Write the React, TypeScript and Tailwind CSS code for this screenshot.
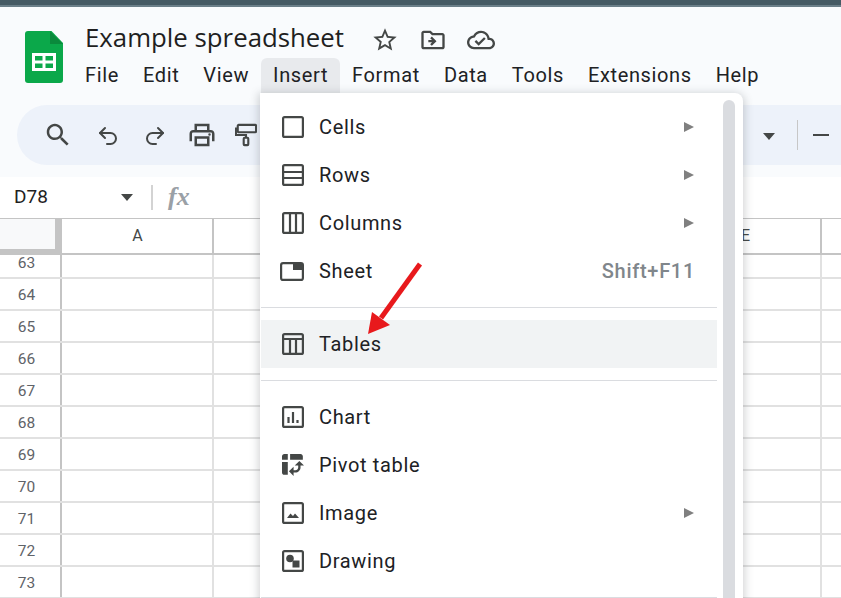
import { Redo2, Undo2 } from "lucide-react";
import type { ReactNode } from "react";

const menuBar = ["File", "Edit", "View", "Insert", "Format", "Data", "Tools", "Extensions", "Help"];
const rowNumbers = [64, 65, 66, 67, 68, 69, 70, 71, 72, 73];
const columns = ["A", "B", "C", "D", "E"];

function Mat({ d, className }: { d: string; className: string }) {
  return (
    <svg viewBox="0 0 24 24" className={className} fill="currentColor">
      <path d={d} />
    </svg>
  );
}

function SheetsLogo() {
  return (
    <svg viewBox="0 0 38 52" className="h-[52px] w-[38px] shrink-0">
      <path d="M3 0h23.500l11.500 12v37a3 3 0 0 1-3 3H3a3 3 0 0 1-3-3V3a3 3 0 0 1 3-3z" fill="#0ba84a" />
      <path d="M25 0l13 13H25z" fill="#0a8a3c" />
      <path d="M7 22h24v18H7z" fill="#fff" />
      <path d="M10 25h7.500v4.500H10zM20.500 25H28v4.500h-7.500zM10 32.500h7.500V37H10zM20.500 32.500H28V37h-7.500z" fill="#0ba84a" />
    </svg>
  );
}

function MenuIcon({ children }: { children: ReactNode }) {
  return (
    <svg viewBox="0 0 22 22" className="h-[22px] w-[22px] shrink-0" fill="none" stroke="#444746" strokeWidth="2.200">
      {children}
    </svg>
  );
}

const box = <rect x="1.100" y="1.100" width="19.800" height="19.800" rx="1.500" />;

function MenuRow({
  icon,
  label,
  arrow,
  shortcut,
  active,
}: {
  icon: ReactNode;
  label: string;
  arrow?: boolean;
  shortcut?: string;
  active?: boolean;
}) {
  return (
    <div className={`flex h-12 w-[456px] items-center pl-[21px] pr-[23px] ${active ? "bg-[#f1f3f4]" : ""}`}>
      <div className="flex w-[37px] shrink-0 items-center">{icon}</div>
      <span className="text-[20px] tracking-[0.65px] text-[#202124]">{label}</span>
      <div className="flex-1" />
      {shortcut && <span className="-mr-px text-[20px] font-medium tracking-[0.7px] text-[#80868b]">{shortcut}</span>}
      {arrow && <div className="h-0 w-0 border-y-[5.500px] border-l-[10px] border-y-transparent border-l-[#808080]" />}
    </div>
  );
}

function Separator() {
  return <div className="my-3 h-px w-[456px] bg-[#dadce0]" />;
}

function InsertMenu() {
  return (
    <div className="absolute left-[260px] top-[93px] flex h-[520px] w-[483px] rounded-tr-lg bg-white pl-px pt-[10px] shadow-[0_2px_8px_2px_rgba(60,64,67,0.22)]">
      <div className="w-[456px]">
        <MenuRow label="Cells" arrow icon={<MenuIcon>{box}</MenuIcon>} />
        <MenuRow
          label="Rows"
          arrow
          icon={
            <MenuIcon>
              {box}
              <path d="M1 8h20M1 14h20" />
            </MenuIcon>
          }
        />
        <MenuRow
          label="Columns"
          arrow
          icon={
            <MenuIcon>
              {box}
              <path d="M8 1v20M14 1v20" />
            </MenuIcon>
          }
        />
        <MenuRow
          label="Sheet"
          shortcut="Shift+F11"
          icon={
            <svg viewBox="0 0 24 19" className="-ml-[2px] h-[19px] w-[24px]" fill="none">
              <rect x="1.100" y="1.100" width="21.800" height="16.800" rx="2" stroke="#444746" strokeWidth="2.200" />
              <path d="M13 1h10v7H13z" fill="#444746" />
            </svg>
          }
        />
        <Separator />
        <MenuRow
          label="Tables"
          active
          icon={
            <MenuIcon>
              {box}
              <path d="M1 6h20M8 6v15M14 6v15" />
            </MenuIcon>
          }
        />
        <Separator />
        <MenuRow
          label="Chart"
          icon={
            <MenuIcon>
              {box}
              <path d="M6.500 11v6M11 6v11M15.500 14v3" />
            </MenuIcon>
          }
        />
        <MenuRow
          label="Pivot table"
          icon={
            <svg viewBox="3 3 19 19" className="h-[22px] w-[22px]" fill="#444746">
              <path d="M10 8h11V5c0-1.100-.9-2-2-2h-9v5zM3 8h5V3H5c-1.100 0-2 .9-2 2v3zm2 13h3V10H3v9c0 1.100.9 2 2 2zm8 1l-4-4 4-4zm1-9l4-4 4 4zm.580 6H13v-2h1.580c1.330 0 2.420-1.090 2.420-2.420V13h2v1.580c0 2.440-1.980 4.420-4.420 4.420z" />
            </svg>
          }
        />
        <MenuRow
          label="Image"
          arrow
          icon={
            <MenuIcon>
              {box}
              <path d="M5 16l3.500-4.500 2.500 2.500 2-2.500L17 16z" fill="#444746" stroke="none" />
            </MenuIcon>
          }
        />
        <MenuRow
          label="Drawing"
          icon={
            <MenuIcon>
              {box}
              <circle cx="8" cy="8.500" r="3.800" fill="#444746" stroke="none" />
              <path d="M10.500 10.500h7v7h-7z" fill="#444746" stroke="none" />
            </MenuIcon>
          }
        />
        <Separator />
      </div>
      <div className="-mt-[3px] ml-[6px] h-full w-3 rounded-t-md bg-[#dadce0]" />
    </div>
  );
}

function GridRow({ label, height, labelClass }: { label: number; height: string; labelClass: string }) {
  return (
    <div className={`flex shrink-0 border-b-2 border-[#e1e1e1] ${height}`}>
      <div
        className={`flex w-[62px] shrink-0 items-center justify-center border-r-2 border-[#c4c4c4] pr-[7px] text-[15.500px] leading-none text-[#5f6368] ${labelClass}`}
      >
        {label}
      </div>
      {columns.map((c) => (
        <div key={c} className="w-[152px] shrink-0 border-r-2 border-[#e1e1e1]" />
      ))}
    </div>
  );
}

export default function App() {
  return (
    <div className="relative h-[598px] w-[841px] overflow-hidden bg-white font-[Roboto,sans-serif]">
      <div className="h-[7px] border-b-2 border-[#6b7f89] bg-[#455a64]" />

      {/* Title + menus */}
      <div className="bg-[#f9fbfd]">
        <div className="flex h-[98px] items-start pl-[25px] pt-6">
          <SheetsLogo />
          <div className="ml-5 -mt-[12px]">
            <div className="flex h-[38px] items-center pl-[2px]">
              <span className="font-['Open_Sans',sans-serif] text-[25.800px] leading-none text-[#1f1f1f]">
                Example spreadsheet
              </span>
              <div className="ml-[27px] mt-1 flex items-center gap-5 text-[#444746]">
                <Mat className="h-7 w-7" d="M22 9.240l-7.190-.620L12 2 9.190 8.630 2 9.240l5.460 4.730L5.820 21 12 17.270 18.180 21l-1.630-7.030L22 9.240zM12 15.400l-3.760 2.270 1-4.280-3.320-2.880 4.380-.380L12 6.100l1.710 4.040 4.380.380-3.320 2.880 1 4.280L12 15.400z" />
                <Mat className="h-7 w-7" d="M20 6h-8l-2-2H4c-1.100 0-2 .9-2 2v12c0 1.100.9 2 2 2h16c1.100 0 2-.9 2-2V8c0-1.100-.9-2-2-2zm0 12H4V6h5.170l2 2H20v10zm-8.840-6H8v2h3.160l-1.590 1.590L11 17l4-4-4-4-1.410 1.410L11.160 12z" />
                <Mat className="h-7 w-7" d="M19.350 10.040C18.670 6.590 15.640 4 12 4 9.110 4 6.600 5.640 5.350 8.040 2.340 8.360 0 10.910 0 14c0 3.310 2.690 6 6 6h13c2.760 0 5-2.240 5-5 0-2.640-2.050-4.780-4.650-4.960zM19 18H6c-2.210 0-4-1.790-4-4 0-2.050 1.530-3.760 3.560-3.970l1.070-.110.5-.950C8.080 7.140 9.940 6 12 6c2.620 0 4.880 1.860 5.390 4.430l.3 1.500 1.530.110c1.560.1 2.780 1.410 2.780 2.960 0 1.650-1.350 3-3 3zm-9-3.820l-2.090-2.090L6.500 13.500 10 17l6.010-6.010-1.410-1.410z" />
              </div>
            </div>
            <div className="-ml-[10px] mt-[1px] flex h-[35px]">
              {menuBar.map((m) => (
                <div
                  key={m}
                  className={`flex items-center rounded-t-md px-3 pb-px text-[20px] tracking-[0.63px] text-[#202124] ${m === "Insert" ? "bg-[#e8eaed] text-[#3c4043]" : ""}`}
                >
                  {m}
                </div>
              ))}
            </div>
          </div>
        </div>

        {/* Toolbar */}
        <div className="ml-[17px] flex h-[60px] items-center rounded-l-[30px] bg-[#edf2fa] pl-[26px] text-[#444746]">
          <Mat className="h-[30px] w-[30px]" d="M15.500 14h-.790l-.280-.270C15.410 12.590 16 11.110 16 9.500 16 5.910 13.090 3 9.500 3S3 5.910 3 9.500 5.910 16 9.500 16c1.610 0 3.090-.590 4.230-1.570l.270.280v.790l5 4.990L20.490 19l-4.990-5zm-6 0C7.010 14 5 11.990 5 9.500S7.010 5 9.500 5 14 7.010 14 9.500 11.990 14 9.500 14z" />
          <Undo2 className="ml-[23px] mt-[2px] h-[24px] w-[24px]" strokeWidth={2} />
          <Redo2 className="ml-[23px] mt-[2px] h-[24px] w-[24px]" strokeWidth={2} />
          <Mat className="ml-5 h-[30px] w-[30px]" d="M19 8h-1V3H6v5H5c-1.660 0-3 1.340-3 3v6h4v4h12v-4h4v-6c0-1.660-1.340-3-3-3zM8 5h8v3H8V5zm8 14H8v-4h8v4zm2-2v-4H6v4H4v-6c0-.550.450-1 1-1h14c.550 0 1 .450 1 1v6h-2zm1-5.500a1 1 0 1 1-2 0 1 1 0 0 1 2 0z" />
          <svg viewBox="0 0 24 26" className="ml-[18px] h-[26px] w-[22px] shrink-0" fill="none" stroke="#444746" strokeWidth="2.300">
            <rect x="3" y="2" width="20" height="8" rx="1" />
            <path d="M3 6H1v7h11v3" />
            <rect x="9.500" y="16" width="5" height="8" rx="1" />
          </svg>
          <div className="flex-1" />
          <div className="mt-[2px] h-0 w-0 border-x-[6.500px] border-t-[7px] border-x-transparent border-t-[#444746]" />
          <div className="ml-[22px] h-[30px] w-px bg-[#c7c7c7]" />
          <div className="ml-[15px] h-[2.500px] w-4 bg-[#444746]" />
          <div className="w-[12px]" />
        </div>
        <div className="h-3" />
      </div>

      {/* Formula bar */}
      <div className="flex h-[42px] items-center border-b border-[#c4c4c4] bg-white pb-px pl-[14px]">
        <span className="w-[107px] text-[19px] text-[#1f1f1f]">D78</span>
        <div className="h-0 w-0 border-x-[6.500px] border-t-[7px] border-x-transparent border-t-[#444746]" />
        <div className="ml-[18px] h-[25px] w-[2px] bg-[#d3d3d3]" />
        <span className="ml-[15px] font-['Liberation_Serif',serif] text-[26px] font-bold italic leading-none text-[#9aa0a6]">
          fx
        </span>
      </div>

      {/* Grid */}
      <div className="flex h-[36px] shrink-0 border-b-[2px] border-[#c4c4c4]">
        <div className="flex w-[62px] shrink-0 border-r-2 border-[#c4c4c4]">
          <div className="h-[30px] w-[55px] border-r-[5px] border-b-[5px] border-[#c4c4c4] bg-[#f8f9fa] box-content" />
        </div>
        {columns.map((c) => (
          <div
            key={c}
            className="flex w-[152px] shrink-0 items-center justify-center border-r-2 border-[#c4c4c4] pl-px text-[16px] text-[#444746]"
          >
            {c}
          </div>
        ))}
      </div>
      <GridRow label={63} height="h-[24px]" labelClass="pb-1" />
      {rowNumbers.map((n) => (
        <GridRow key={n} label={n} height="h-8" labelClass="pt-[3px]" />
      ))}

      {/* Overlays */}
      <InsertMenu />
      <svg viewBox="0 0 841 598" className="pointer-events-none absolute left-0 top-0 h-[598px] w-[841px]">
        <path d="M420 264L381 318" stroke="#e8191c" strokeWidth="5" />
        <path d="M368 334L372 312L390 325Z" fill="#e8191c" />
      </svg>
    </div>
  );
}
